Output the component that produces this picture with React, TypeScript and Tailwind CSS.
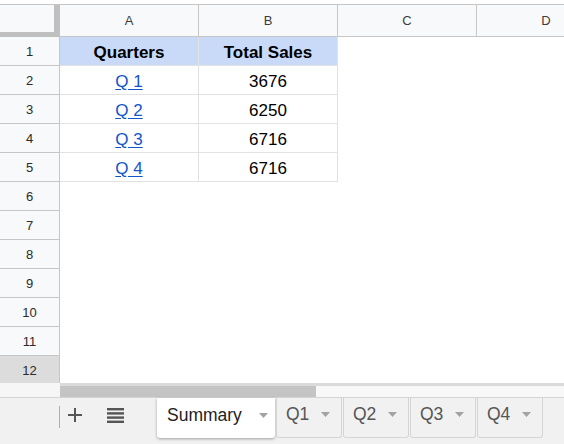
import React from 'react';

const cols = ['A', 'B', 'C', 'D', 'E'];

const rows: { a?: string; b?: string; head?: boolean }[] = [
  { a: 'Quarters', b: 'Total Sales', head: true },
  { a: 'Q 1', b: '3676' },
  { a: 'Q 2', b: '6250' },
  { a: 'Q 3', b: '6716' },
  { a: 'Q 4', b: '6716' },
];

function Caret() {
  return (
    <svg width="9" height="5" viewBox="0 0 9 5" className="shrink-0">
      <path d="M0 0h9L4.5 5z" fill="#a3a3a3" />
    </svg>
  );
}

export default function App() {
  return (
    <div className="w-[564px] h-[444px] overflow-hidden bg-white flex flex-col font-['Liberation_Sans',Arial,sans-serif] text-black">
      {/* top strip */}
      <div className="h-[5px] shrink-0 border-b border-[#c6c6c6] bg-white" />

      {/* column headers */}
      <div className="h-[32px] shrink-0 flex">
        <div className="w-[60px] shrink-0 flex flex-col bg-[#f8f9fa]">
          <div className="flex-1 flex">
            <div className="flex-1" />
            <div className="w-[6px] bg-[#c0c0c0]" />
          </div>
          <div className="h-[5px] bg-[#c0c0c0]" />
        </div>
        {cols.map((c) => (
          <div
            key={c}
            className="w-[139px] shrink-0 flex items-center justify-center bg-[#f8f9fa] border-r border-b border-[#c6c6c6] text-[13px] text-[#3c3c3c]"
          >
            {c}
          </div>
        ))}
      </div>

      {/* rows */}
      <div className="h-[346px] shrink-0 flex flex-col overflow-hidden">
        {Array.from({ length: 12 }).map((_, i) => {
          const r = rows[i];
          const selected = i === 11;
          return (
            <div key={i} className="h-[29px] shrink-0 flex">
              <div
                className={`w-[60px] shrink-0 flex items-center justify-center pt-[2px] border-r border-b border-[#c6c6c6] text-[13px] text-[#2a2a2a] ${
                  selected ? 'bg-[#dcdcdc]' : 'bg-[#f8f9fa]'
                }`}
              >
                {i + 1}
              </div>
              {r ? (
                <>
                  <div
                    className={`w-[139px] shrink-0 flex items-end justify-center pb-[2px] border-r border-b border-[#e2e2e2] text-[17px] leading-[20px] ${
                      r.head ? 'bg-[#c9daf8] font-bold' : ''
                    }`}
                  >
                    {r.head ? r.a : <span className="text-[#1155cc] underline underline-offset-[2px]">{r.a}</span>}
                  </div>
                  <div
                    className={`w-[139px] shrink-0 flex items-end justify-center pb-[2px] border-r border-b border-[#e2e2e2] text-[17px] leading-[20px] ${
                      r.head ? 'bg-[#c9daf8] font-bold' : ''
                    }`}
                  >
                    {r.b}
                  </div>
                </>
              ) : null}
            </div>
          );
        })}
      </div>

      {/* horizontal scrollbar */}
      <div className="h-[14px] shrink-0 flex">
        <div className="w-[60px] shrink-0 bg-[#f6f6f6]" />
        <div className="flex-1 flex flex-col bg-[#f8f8f8]">
          <div className="h-[3px] bg-[#dadada]" />
          <div className="flex-1 flex">
            <div className="w-[256px] bg-[#c4c4c4]" />
          </div>
        </div>
      </div>

      {/* sheet tabs */}
      <div className="flex-1 flex items-start bg-[#f1f1f1] border-t border-[#d4d4d4]">
        <div className="w-[60px] shrink-0 h-full flex items-center justify-end">
          <div className="w-px h-[22px] bg-[#8ab4f8] mt-[-8px]" />
        </div>
        <div className="w-[30px] h-[40px] flex items-center justify-center pb-[6px]">
          <svg width="14" height="14" viewBox="0 0 14 14">
            <path d="M6 0h2v6h6v2H8v6H6V8H0V6h6z" fill="#555" />
          </svg>
        </div>
        <div className="w-[38px] h-[40px] flex items-center justify-center ml-[6px] pb-[6px]">
          <svg width="17" height="15" viewBox="0 0 17 15">
            <rect y="0" width="17" height="2.4" fill="#555" />
            <rect y="4.2" width="17" height="2.4" fill="#555" />
            <rect y="8.4" width="17" height="2.4" fill="#555" />
            <rect y="12.6" width="17" height="2.4" fill="#555" />
          </svg>
        </div>
        <div className="ml-[23px] flex items-start">
          <div className="w-[118px] h-[40px] bg-white rounded-b-[3px] shadow-[0_1px_3px_rgba(0,0,0,0.35)] flex items-center pl-[10px] pr-[12px] pb-[6px] gap-[17px] text-[17.5px] text-[#222]">
            <span>Summary</span>
            <Caret />
          </div>
          {['Q1', 'Q2', 'Q3', 'Q4'].map((t) => (
            <div
              key={t}
              className="w-[66px] h-[40px] ml-[1px] border border-t-0 border-[#d6d6d6] rounded-b-[3px] flex items-center pl-[9px] pb-[6px] gap-[12px] text-[17.5px] text-[#555] first:ml-[2px]"
            >
              <span>{t}</span>
              <Caret />
            </div>
          ))}
        </div>
      </div>
    </div>
  );
}
